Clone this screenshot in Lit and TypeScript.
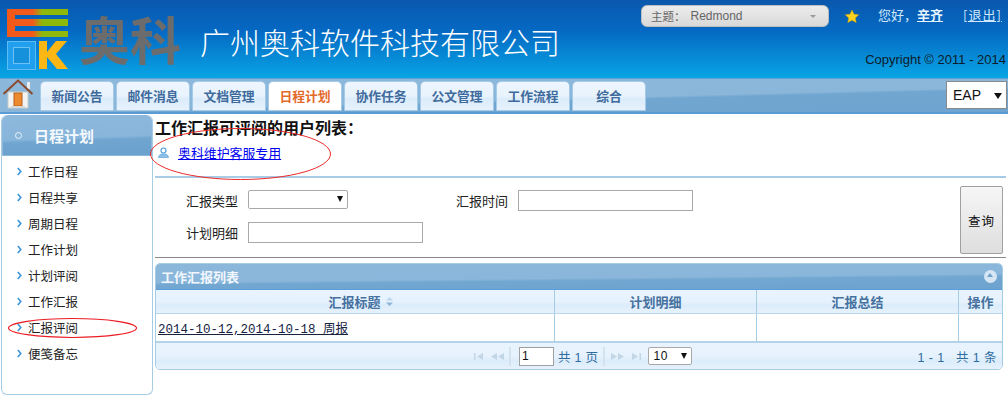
import { LitElement, html, css } from "lit";
import { customElement } from "lit/decorators.js";

const TABS = ["新闻公告", "邮件消息", "文档管理", "日程计划", "协作任务", "公文管理", "工作流程", "综合"];
const MENU = ["工作日程", "日程共享", "周期日程", "工作计划", "计划评阅", "工作汇报", "汇报评阅", "便笺备忘"];

@customElement("app-root")
export class AppRoot extends LitElement {
  static styles = css`
    :host { display: block; position: relative; width: 1008px; height: 405px; overflow: hidden; background: #fff;
      font-family: "Liberation Sans", "Noto Sans CJK SC", sans-serif; font-size: 13px; color: #222; }
    * { box-sizing: border-box; }
    .cjk { font-family: "Noto Sans CJK SC", sans-serif; }

    .header { height: 78px; display: flex; overflow: hidden; background: linear-gradient(180deg, #0a58ad 0%, #0569c3 40%, #08a5e5 100%); }
    .logo { margin: 9px 0 0 7px; flex: none; }
    .brand { margin: 6px 0 0 11px; width: 110px; font: 700 51px/64px "Noto Sans CJK SC", sans-serif; color: #6c6c6c; flex: none; white-space: nowrap; height: 72px; }
    .company { margin: 19px 0 0 11px; font: 300 30px/44px "Noto Sans CJK SC", sans-serif; color: #fff; white-space: nowrap; flex: none; width: 441px; }
    .hright { flex: 1; padding: 5px 2px 0 0; display: flex; flex-direction: column; }
    .top { display: flex; align-items: center; height: 22px; }
    .theme { width: 188px; height: 22px; border-radius: 6px; background: linear-gradient(#ececec, #d9d9d9); border: 1px solid #bdbdbd;
      display: flex; align-items: center; padding: 0 9px; font-size: 11.5px; color: #666; flex: none; }
    .theme .val { margin-left: 5px; flex: 1; font-size: 12px; }
    .theme .car { width: 0; height: 0; border: 3px solid transparent; border-top: 3px solid #999; margin: 3px 3px 0 0; }
    .star { margin-left: 16px; flex: none; }
    .hello { margin: -3px 0 0 19px; color: #cfe8fb; font-size: 13px; white-space: nowrap; }
    .hello a { color: #e4f4ff; text-decoration: underline; font-weight: 700; }
    .logout { margin: -3px 0 0 20px; color: #cfe8fb; font-size: 13px; letter-spacing: 1px; text-decoration: underline; white-space: nowrap; }
    .copy { margin-top: 24px; text-align: right; color: #0d1b2a; font-size: 13px; line-height: 18px; white-space: nowrap; }

    .nav { height: 36px; padding-top: 2px; display: flex; align-items: flex-start;
      background: linear-gradient(178.5deg, #8cb8db 0%, #8ab6da 58%, #71a6d0 62%, #6ea4cf 100%);
      border-top: 1px solid #5fa3d8; border-bottom: 2px solid #5a9bd3; }
    .home { margin: -2px 6px 0 2px; flex: none; }
    .tab { width: 74px; height: 30px; margin-right: 2px; border: 1px solid #a6cbe8; border-radius: 5px 5px 0 0;
      background: linear-gradient(#eef6fe 0%, #e8f3fd 50%, #dcecfa 60%, #e6f2fd 100%);
      font: 700 12.8px/27px "Noto Sans CJK SC", sans-serif; color: #3f6b9c; text-align: center; flex: none; }
    .tab.on { background: #fff; color: #e4692b; }
    .sys { margin: 0 1px 0 auto; width: 61px; height: 28px; background: #fff; border: 1px solid #8a8a8a; position: relative;
      font-size: 14px; line-height: 26px; padding-left: 6px; color: #111; }
    .sys::after { content: ""; position: absolute; right: 4px; top: 11px; border: 4px solid transparent; border-top: 6px solid #111; border-bottom: 0; }

    .main { display: flex; align-items: flex-start; }
    .side { margin: 1px 0 0 1px; width: 152px; height: 280px; border: 1px solid #a6cbe4; border-top: 0; border-radius: 6px; flex: none; background: #fff; }
    .side-h { height: 41px; border-radius: 6px 6px 0 0; border: 1px solid #8cb8db; display: flex; align-items: center; padding-left: 12px;
      background: linear-gradient(178deg, #8bb8db 0%, #88b5da 55%, #70a5d0 62%, #6ba1cd 100%);
      color: #f4f9fe; font: 700 15px "Noto Sans CJK SC", sans-serif; }
    .dot { width: 7px; height: 7px; border: 1px solid #eaf3fb; border-radius: 50%; margin-right: 12px; flex: none; }
    .menu { padding-top: 2px; }
    .mi { height: 26px; display: flex; align-items: center; padding-left: 15px; font: 12.5px "Noto Sans CJK SC", sans-serif; color: #222; }
    .mi svg { margin-right: 6px; flex: none; }

    .content { margin-left: 2px; width: 851px; flex: none; }
    h3 { margin: 3px 0 0; font: 700 16px/20px "Noto Sans CJK SC", sans-serif; color: #111; white-space: nowrap; }
    .user { margin: 5px 0 0 3px; height: 20px; display: flex; align-items: center; }
    .user svg { margin-right: 9px; }
    .user a { color: #0000ee; text-decoration: underline; font: 12.9px "Noto Sans CJK SC", sans-serif; }
    .rule { height: 2px; margin-top: 14px; background: #a8cce5; }
    .form { height: 80px; border-bottom: 1px solid #8a8a8a; display: flex; padding: 8px 3px 0 31px; justify-content: space-between; }
    .grid { display: grid; grid-template-columns: 62px 208px 62px 175px; grid-auto-rows: 21px; row-gap: 11px; margin-top: 4px; }
    .lab { font: 13px/21px "Noto Sans CJK SC", sans-serif; color: #222; }
    input { display: block; border: 1px solid #a9a9a9; padding: 0 2px; background: #fff; margin: 0; height: 21px; width: 175px; font: 12px "Liberation Sans", sans-serif; }
    .sel { width: 100px; height: 19px; border: 1px solid #a9a9a9; border-radius: 2px; position: relative; background: #fff; }
    .sel::after { content: ""; position: absolute; right: 4px; top: 5px; border: 3.5px solid transparent; border-top: 6px solid #111; border-bottom: 0; }
    .btn { width: 43px; height: 68px; border: 1px solid #a0a0a0; border-radius: 2px; background: linear-gradient(#f6f6f6, #dedede); display: flex; align-items: center; justify-content: center;
      font: 12.5px "Noto Sans CJK SC", sans-serif; color: #111; padding: 0; letter-spacing: 1px; }

    .panel { margin-top: 5px; width: 848px; border: 1px solid #a6cbe4; border-radius: 5px; overflow: hidden; }
    .p-h { height: 26px; display: flex; align-items: center; justify-content: space-between; padding: 0 5px 1px 5px;
      background: linear-gradient(179.4deg, #8bb7db 0%, #89b6da 55%, #72a7d1 62%, #6ca2ce 100%); border-bottom: 1px solid #5a9fdc;
      color: #f1f7fd; font: 700 13px "Noto Sans CJK SC", sans-serif; }
    .coll { width: 13px; height: 13px; border-radius: 50%; background: #d5e5f3; position: relative; }
    .coll::after { content: ""; position: absolute; left: 3px; top: 3px; border: 3.5px solid transparent; border-bottom: 4px solid #6fa0cc; border-top: 0; }
    .row { display: grid; grid-template-columns: 399px 202px 202px 1fr; }
    .row > div { border-right: 1px solid #a6cbe4; display: flex; align-items: center; }
    .row > div:last-child { border-right: 0; }
    .ths { height: 24px; background: linear-gradient(#e8f3fd 0%, #e6f2fd 50%, #dcecfa 65%, #e6f2fd 100%); border-bottom: 1px solid #b8d6ec; }
    .ths > div { justify-content: center; font: 700 13px "Noto Sans CJK SC", sans-serif; color: #46719f; }
    .ths > div.first { padding-left: 12px; }
    .ths svg { margin-left: 4px; }
    .tds { height: 29px; background: #fff; border-bottom: 2px solid #b4d2e8; }
    .tds a { margin-left: 2px; color: #15233f; text-decoration: underline; font: 12.5px "Liberation Mono", "Noto Sans CJK SC", monospace; white-space: nowrap; }
    .pager { height: 26px; display: flex; align-items: center; padding: 0 5px 0 317px; font-size: 12px; color: #2a6ea3;
      background: linear-gradient(#e8f3fd 0%, #e6f2fd 50%, #dcecfa 70%, #e6f2fd 100%); }
    .pager svg { flex: none; }
    .sep { width: 2px; height: 19px; background: #d4e2ee; margin: 0 5px; flex: none; }
    .pager input { width: 35px; height: 19px; font-size: 12px; color: #111; margin-left: 3px; border-color: #a0a0a0; }
    .t { margin-left: 4px; font: 12.5px "Liberation Sans", "Noto Sans CJK SC", sans-serif; letter-spacing: .3px; white-space: nowrap; color: #2c6c9f; }
    .size { width: 44px; height: 18px; border: 1px solid #a9a9a9; border-radius: 2px; background: #fff; position: relative; margin-left: 6px; font-size: 12px; line-height: 16px; padding-left: 4px; color: #111; letter-spacing: .6px; flex: none; }
    .size::after { content: ""; position: absolute; right: 4px; top: 5px; border: 3.5px solid transparent; border-top: 6px solid #111; border-bottom: 0; }
    .count { margin-left: auto; letter-spacing: .4px; }
    .ring { position: absolute; left: 0; top: 0; pointer-events: none; }
  `;

  private chev() {
    return html`<svg width="5" height="9" viewBox="0 0 5 9"><path d="M0.8 1l3 3.5-3 3.5" fill="none" stroke="#3a95d8" stroke-width="1.6"/></svg>`;
  }

  render() {
    return html`
      <div class="header">
        <svg class="logo" width="61" height="61" viewBox="0 0 61 61">
          <defs><linearGradient id="eg" x1="0" x2="1" y1="0" y2="0">
            <stop offset="0.42" stop-color="#f25a1c"/><stop offset="0.58" stop-color="#8fb90a"/></linearGradient></defs>
          <path d="M0 0h61v6H8v4h53v7H8v5h53v6H0z" fill="url(#eg)"/>
          <rect x=".5" y="32.500" width="28" height="28" fill="#1f9fee" stroke="#5cbcf5"/>
          <rect x="6.500" y="38.500" width="16" height="16" fill="#1590da" stroke="#6cc2f3"/>
          <path d="M32 32h8v11l9-11h11L49 45l12 15H50l-10-12v12h-8z" fill="#fdb714"/>
        </svg>
        <div class="brand">奥科</div>
        <div class="company">广州奥科软件科技有限公司</div>
        <div class="hright">
          <div class="top">
            <div class="theme"><span class="cjk">主题：</span><span class="val">Redmond</span><span class="car"></span></div>
            <svg class="star" width="14" height="13" viewBox="0 0 14 13"><path d="M7 0l2 4.200 4.700.6-3.400 3.200.9 4.600L7 10.300 2.800 12.600l.9-4.600L.3 4.800 5 4.200z" fill="#ffd21f" stroke="#d9a400" stroke-width=".5"/></svg>
            <span class="hello cjk">您好，<a>辛齐</a></span>
            <span class="logout cjk">[退出]</span>
          </div>
          <div class="copy">Copyright © 2011 - 2014</div>
        </div>
      </div>

      <div class="nav">
        <svg class="home" width="32" height="30" viewBox="0 0 32 30">
          <rect x="6" y="13" width="20" height="16" fill="#f3f4f2" stroke="#c9ccc8"/>
          <rect x="25" y="3" width="3" height="7" fill="#ececec"/>
          <path d="M1.500 15L16 1.500 30.500 15" fill="none" stroke="#8b4a2b" stroke-width="2"/>
          <rect x="12" y="14" width="8" height="13" fill="#ee8a2e" stroke="#b45f1d"/>
          <rect x="9" y="27" width="14" height="2" fill="#d8d8d8"/>
        </svg>
        ${TABS.map((t) => html`<div class="tab ${t === "日程计划" ? "on" : ""}">${t}</div>`)}
        <div class="sys">EAP</div>
      </div>

      <div class="main">
        <div class="side">
          <div class="side-h"><span class="dot"></span>日程计划</div>
          <div class="menu">
            ${MENU.map((m) => html`<div class="mi">${this.chev()}<span>${m}</span></div>`)}
          </div>
        </div>
        <div class="content">
          <h3>工作汇报可评阅的用户列表：</h3>
          <div class="user">
            <svg width="11" height="11" viewBox="0 0 11 11"><circle cx="5.500" cy="3.500" r="2.500" fill="none" stroke="#4a9bd8" stroke-width="1.100"/><path d="M0.500 10.500h10c0-2-1.500-3-3-3.500h-4c-1.500.5-3 1.500-3 3.500z" fill="#8cc0e8" stroke="#4a9bd8" stroke-width=".6"/></svg>
            <a>奥科维护客服专用</a>
          </div>
          <div class="rule"></div>
          <div class="form">
            <div class="grid">
              <div class="lab">汇报类型</div>
              <div><div class="sel"></div></div>
              <div class="lab">汇报时间</div>
              <input />
              <div class="lab">计划明细</div>
              <input />
            </div>
            <button class="btn">查询</button>
          </div>
          <div class="panel">
            <div class="p-h"><span>工作汇报列表</span><span class="coll"></span></div>
            <div class="row ths">
              <div class="first">汇报标题<svg width="9" height="11" viewBox="0 0 9 11"><path d="M4.500 1l3.500 3.500H1z" fill="#bcd5ea"/><path d="M1 6.500h7L4.500 10z" fill="#8db4d6"/></svg></div>
              <div>计划明细</div><div>汇报总结</div><div>操作</div>
            </div>
            <div class="row tds">
              <div><a>2014-10-12,2014-10-18 周报</a></div><div></div><div></div><div></div>
            </div>
            <div class="pager">
              <svg width="11" height="7" viewBox="0 0 11 7"><path d="M1 0h1.500v7H1zM10 0v7L4 3.500z" fill="#c3d6e6"/></svg>
              <svg style="margin-left:7px" width="13" height="7" viewBox="0 0 13 7"><path d="M6 0v7L0 3.500zM13 0v7L7 3.500z" fill="#c3d6e6"/></svg>
              <span class="sep"></span>
              <input value="1" />
              <span class="t">共 1 页</span>
              <span class="sep"></span>
              <svg style="margin-left:1px" width="13" height="7" viewBox="0 0 13 7"><path d="M0 0v7l6-3.500zM7 0v7l6-3.500z" fill="#c3d6e6"/></svg>
              <svg style="margin-left:7px" width="11" height="7" viewBox="0 0 11 7"><path d="M1 0v7l6-3.500zM8.500 0H10v7H8.500z" fill="#c3d6e6"/></svg>
              <div class="size">10</div>
              <span class="t count">1 - 1 &nbsp; 共 1 条</span>
            </div>
          </div>
        </div>
      </div>

      <svg class="ring" width="1008" height="405" viewBox="0 0 1008 405">
        <ellipse cx="240.500" cy="154" rx="90" ry="25.500" fill="none" stroke="#ec2a2a" stroke-width="1"/>
        <ellipse cx="72.500" cy="328" rx="64" ry="9.500" fill="none" stroke="#ec1c24" stroke-width="1.200"/>
      </svg>
    `;
  }
}
